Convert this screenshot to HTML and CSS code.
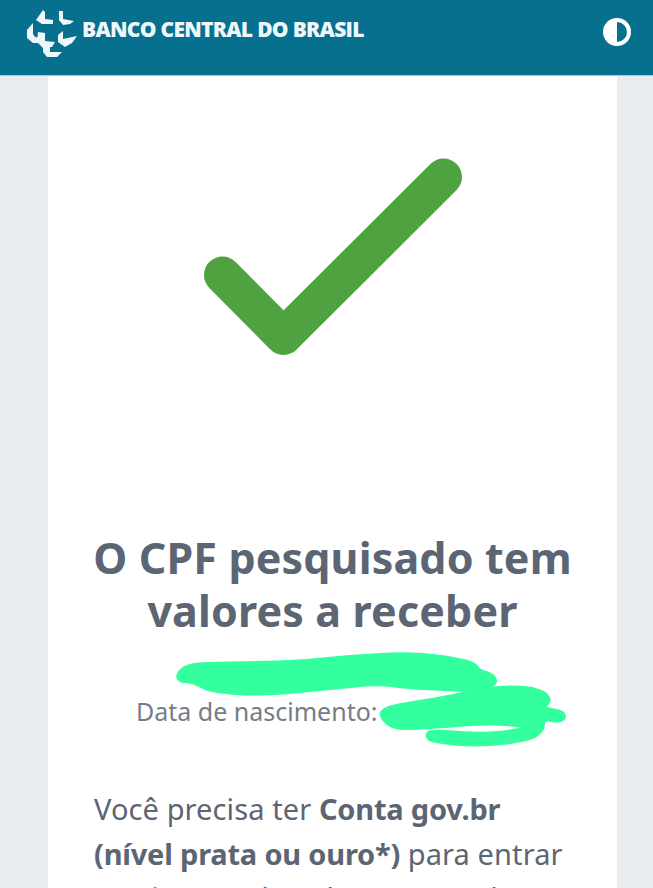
FILE: index.html
```html
<!DOCTYPE html>
<html lang="pt-BR">
<head>
    <meta charset="UTF-8">
    <title>Valores a Receber</title>
    <link rel="stylesheet" href="styles.css">
</head>
<body>
<header class="topbar">
    <div class="brand">
        <svg class="brand-logo" viewBox="0 0 52 49" width="52" height="49">
            <path d="M17 1 L10 11 L16 15 L27 15 L27 11 L19 10 L19 3 Z"/>
            <path d="M33 2 L37 2 L37 10 L48 12 L44 15 L37 16 L33 11 Z"/>
            <path d="M7 14 L1 21 L1 29 L7 34 L15 34 L17 29 L9 28 L7 25 Z"/>
            <path d="M12 23 L19 24 L19 32 L29 33 L26 38 L17 39 L11 33 Z"/>
            <path d="M32 26 L37 22 L37 30 L51 27 L46 34 L39 38 L32 33 Z"/>
            <path d="M17 36 L24 34 L24 43 L36 43 L31 48 L21 48 L17 43 Z"/>
        </svg>
        <span class="brand-name">BANCO CENTRAL DO BRASIL</span>
    </div>
    <svg class="theme-toggle" viewBox="0 0 30 30" width="30" height="30">
        <circle cx="15" cy="15" r="14" fill="#fff"/>
        <path d="M15 5 A10 10 0 0 1 15 25 Z" fill="#07708f"/>
    </svg>
</header>
<main class="card">
    <div class="check-wrap">
        <svg viewBox="0 0 290 220" width="290" height="220">
            <path class="check" d="M34.5 130 L95.5 191.5 L255.5 32"/>
        </svg>
    </div>
    <h1 class="title">O CPF pesquisado tem<br>valores a receber</h1>
    <div class="person">
        <p class="birth">Data de nascimento:</p>
        <!-- rabisco por cima dos dados pessoais -->
        <svg class="scribble" viewBox="0 0 1350 360" width="450" height="120">
            <path d="M155 90 Q170 75 215 72 Q260 70 330 69 Q400 68 460 66 Q520 65 585 57 Q650 50 750 44 Q850 38 940 51 Q1030 65 1038 78 Q1045 92 1068 98 Q1090 105 1095 118 Q1100 130 1080 140 Q1060 150 1030 150 Q1000 150 930 147 Q860 145 800 138 Q740 130 670 138 Q600 145 500 155 Q400 165 320 160 Q240 155 215 140 Q190 125 170 125 Q150 125 145 115 Q140 105 155 90 Z"/>
            <path d="M755 218 Q760 205 810 195 Q860 185 910 178 Q960 170 1010 158 Q1060 145 1125 142 Q1190 140 1220 150 Q1250 160 1255 172 Q1260 185 1248 195 Q1235 205 1268 210 Q1300 215 1302 225 Q1305 235 1295 240 Q1285 245 1262 240 Q1240 235 1240 252 Q1240 270 1220 285 Q1200 300 1125 309 Q1050 318 980 312 Q910 305 899 298 Q888 290 894 280 Q900 270 950 275 Q1000 280 1055 280 Q1110 280 1150 272 Q1190 265 1180 260 Q1170 255 1110 252 Q1050 250 955 258 Q860 265 825 265 Q790 265 770 248 Q750 230 755 218 Z"/>
        </svg>
    </div>
    <p class="info">Você precisa ter <strong>Conta gov.br (nível prata ou ouro*)</strong> para entrar no sistema de Valores a Receber.</p>
</main>
</body>
</html>
```

FILE: styles.css
```css
*{
    margin: 0;
    padding: 0;
    box-sizing: border-box;
}
html, body{
    height: 888px;
    overflow: hidden;
}
body{
    background-color: #e9ecef;
    font-family: "Noto Sans", "Open Sans", sans-serif;
    color: #5c6573;
}
.topbar{
    height: 76px;
    background-color: #07708f;
    border-bottom: 1px solid #8fd3e2;
    display: flex;
    align-items: flex-start;
    justify-content: space-between;
    padding: 9px 21px 0 26px;
}
.brand{
    display: flex;
    align-items: center;
    gap: 4px;
}
.brand-logo path{
    fill: #eef8fb;
}
.brand-name{
    margin-bottom: 9px;
    font-family: "Open Sans", sans-serif;
    font-size: 21px;
    font-weight: 800;
    letter-spacing: -0.7px;
    color: #eef8fb;
}
.theme-toggle{
    margin-top: 8px;
}
.card{
    width: 569px;
    height: 812px;
    margin-left: 48px;
    background-color: #fff;
    overflow: hidden;
}
.check-wrap{
    display: flex;
    justify-content: center;
    margin-top: 69px;
}
.check{
    fill: none;
    stroke: #4ea23f;
    stroke-width: 37;
    stroke-linecap: round;
    stroke-linejoin: round;
}
.title{
    margin-top: 166px;
    font-size: 43px;
    line-height: 53px;
    letter-spacing: 0.15px;
    font-weight: 700;
    text-align: center;
    color: #5c6573;
}
.person{
    position: relative;
    height: 110px;
    margin-top: 3px;
}
.birth{
    padding: 55px 0 0 88px;
    font-size: 25px;
    line-height: 32px;
    color: #757c87;
}
.scribble{
    position: absolute;
    left: 82px;
    top: 0;
}
.scribble path{
    fill: #33ff9e;
    stroke: #33ff9e;
    stroke-width: 10;
    stroke-linejoin: round;
}
.info{
    margin-top: 37px;
    padding: 0 46px;
    font-size: 29px;
    line-height: 44.5px;
    letter-spacing: 0.1px;
    color: #5c6573;
}
.info strong{
    letter-spacing: -0.2px;
}
```
